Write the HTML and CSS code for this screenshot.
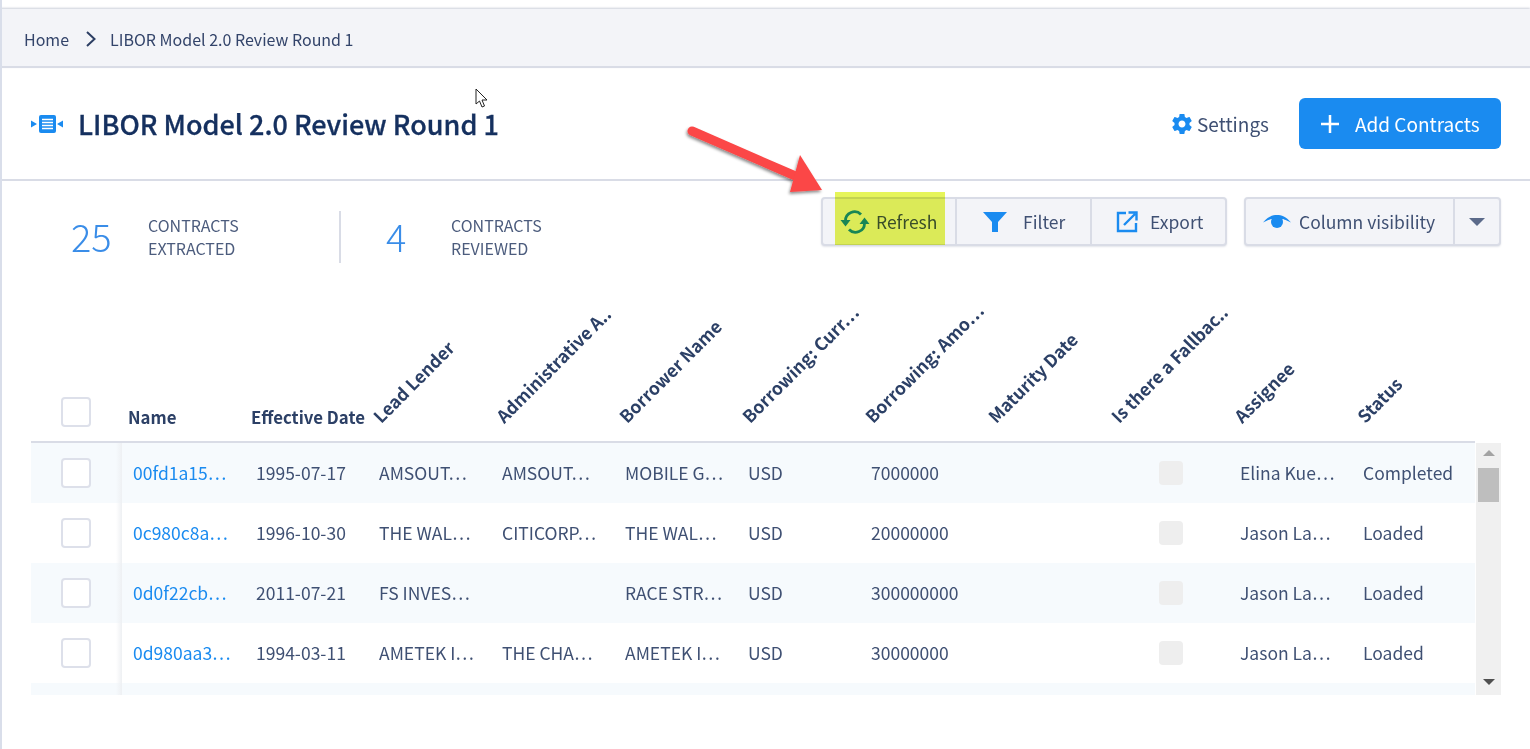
FILE: index.html
```html
<!DOCTYPE html>
<html lang="en">
<head>
    <meta charset="UTF-8">
    <meta name="viewport" content="width=device-width, initial-scale=1.0">
    <title>LIBOR Model 2.0 Review Round 1</title>
    <link rel="stylesheet" href="styles.css">
</head>
<body>
    <nav class="breadcrumb">
        <a href="#">Home</a>
        <svg class="crumb-sep" width="14" height="18" viewBox="0 0 14 18"><path d="M3 2l7.500 7-7.500 7" fill="none" stroke="#2c3e63" stroke-width="2"/></svg>
        <span>LIBOR Model 2.0 Review Round 1</span>
    </nav>

    <header class="page-head">
        <svg class="title-icon" width="32" height="18" viewBox="0 0 32 18">
            <path d="M0 5.500l6 3.500-6 3.500zM32 5.500l-6 3.500 6 3.500z" fill="#1a8bf0"/>
            <rect x="8" y="0" width="17" height="18" rx="2" fill="#1a8bf0"/>
            <path d="M11 4.500h11M11 7.500h11M11 10.500h11M11 13.500h11" stroke="#fff" stroke-width="1.500"/>
        </svg>
        <h1>LIBOR Model 2.0 Review Round 1</h1>
        <a class="settings" href="#">
            <svg width="24" height="24" viewBox="0 0 24 24"><path fill="#1a8bf0" d="M19.430 12.980c.04-.32.07-.64.07-.98s-.03-.66-.07-.98l2.110-1.650c.19-.15.24-.42.12-.64l-2-3.460c-.12-.22-.39-.3-.61-.22l-2.490 1c-.52-.4-1.080-.73-1.690-.98l-.38-2.650C14.460 2.180 14.250 2 14 2h-4c-.25 0-.46.18-.49.420l-.38 2.650c-.61.25-1.170.59-1.690.98l-2.490-1c-.23-.09-.49 0-.61.220l-2 3.460c-.13.220-.07.490.12.640l2.110 1.650c-.04.320-.07.650-.07.980s.03.660.07.980l-2.110 1.650c-.19.150-.24.420-.12.640l2 3.460c.12.220.39.300.61.220l2.490-1c.52.400 1.080.730 1.690.980l.38 2.650c.03.240.24.420.49.420h4c.25 0 .46-.18.49-.42l.38-2.650c.61-.25 1.170-.59 1.690-.98l2.490 1c.23.090.49 0 .61-.22l2-3.460c.12-.22.07-.49-.12-.64l-2.110-1.650zM12 15.500c-1.930 0-3.500-1.570-3.500-3.500s1.570-3.500 3.500-3.500 3.500 1.570 3.500 3.500-1.570 3.500-3.500 3.500z"/></svg>
            <span>Settings</span>
        </a>
        <button class="btn-add">
            <svg width="18" height="18" viewBox="0 0 18 18"><path d="M9 0v18M0 9h18" stroke="#fff" stroke-width="2.500"/></svg>
            Add Contracts
        </button>
    </header>

    <section class="summary">
        <div class="stats">
            <div class="stat stat-first">
                <span class="stat-num">25</span>
                <span class="stat-label">CONTRACTS<br>EXTRACTED</span>
            </div>
            <div class="stat">
                <span class="stat-num">4</span>
                <span class="stat-label">CONTRACTS<br>REVIEWED</span>
            </div>
        </div>
        <div class="tools">
            <div class="btn-group">
                <button class="tool tool-refresh">
                    <svg width="30" height="26" viewBox="0 0 30 26">
                        <path d="M5.500 12a9 9 0 0 1 15.500-6.500M24.500 14a9 9 0 0 1-15.500 6.500" fill="none" stroke="#1a8bf0" stroke-width="2.800"/>
                        <path d="M0.500 11h10l-5 6.500zM29.500 15h-10l5-6.500z" fill="#1a8bf0"/>
                    </svg>
                    <span>Refresh</span>
                </button>
                <button class="tool tool-filter">
                    <svg width="26" height="20" viewBox="0 0 26 20"><path d="M1 0h24l-9 10v10h-6v-10z" fill="#1a8bf0"/></svg>
                    <span>Filter</span>
                </button>
                <button class="tool tool-export">
                    <svg width="22" height="22" viewBox="0 0 22 22">
                        <path d="M10 2H2v18h18v-8" fill="none" stroke="#1a8bf0" stroke-width="2.400"/>
                        <path d="M8 14L19 3M12.500 1.500h8v8" fill="none" stroke="#1a8bf0" stroke-width="2.400"/>
                    </svg>
                    <span>Export</span>
                </button>
            </div>
            <div class="btn-group">
                <button class="tool tool-columns">
                    <svg width="28" height="14" viewBox="0 0 28 14">
                        <path d="M0 7.500C5 1.500 9.500 0 14 0s9 1.500 14 7.500C22 4.500 20 4 19 4a5.300 5.300 0 1 1-10 0C8 4 6 4.500 0 7.500z" fill="#1a8bf0"/>
                        <circle cx="14" cy="7" r="6" fill="#1a8bf0"/>
                    </svg>
                    <span>Column visibility</span>
                </button>
                <button class="tool tool-caret"><i class="caret"></i></button>
            </div>
        </div>
    </section>

    <section class="grid">
        <div class="grid-head">
            <div class="col-check"><span class="check"></span></div>
            <div class="th">Name</div>
            <div class="th">Effective Date</div>
            <div class="th"><span class="th-rot">Lead Lender</span></div>
            <div class="th"><span class="th-rot">Administrative A..</span></div>
            <div class="th"><span class="th-rot">Borrower Name</span></div>
            <div class="th"><span class="th-rot">Borrowing: Curr…</span></div>
            <div class="th"><span class="th-rot">Borrowing: Amo…</span></div>
            <div class="th"><span class="th-rot">Maturity Date</span></div>
            <div class="th"><span class="th-rot">Is there a Fallbac..</span></div>
            <div class="th"><span class="th-rot">Assignee</span></div>
            <div class="th"><span class="th-rot">Status</span></div>
        </div>
        <div class="grid-body">
            <div class="rows">
                <div class="row">
                    <div class="col-check"><span class="check"></span></div>
                    <div class="td"><a href="#">00fd1a15…</a></div>
                    <div class="td">1995-07-17</div>
                    <div class="td">AMSOUT…</div>
                    <div class="td">AMSOUT…</div>
                    <div class="td">MOBILE G…</div>
                    <div class="td">USD</div>
                    <div class="td">7000000</div>
                    <div class="td"></div>
                    <div class="td"><span class="flag"></span></div>
                    <div class="td">Elina Kue…</div>
                    <div class="td">Completed</div>
                </div>
                <div class="row">
                    <div class="col-check"><span class="check"></span></div>
                    <div class="td"><a href="#">0c980c8a…</a></div>
                    <div class="td">1996-10-30</div>
                    <div class="td">THE WAL…</div>
                    <div class="td">CITICORP…</div>
                    <div class="td">THE WAL…</div>
                    <div class="td">USD</div>
                    <div class="td">20000000</div>
                    <div class="td"></div>
                    <div class="td"><span class="flag"></span></div>
                    <div class="td">Jason La…</div>
                    <div class="td">Loaded</div>
                </div>
                <div class="row">
                    <div class="col-check"><span class="check"></span></div>
                    <div class="td"><a href="#">0d0f22cb…</a></div>
                    <div class="td">2011-07-21</div>
                    <div class="td">FS INVES…</div>
                    <div class="td"></div>
                    <div class="td">RACE STR…</div>
                    <div class="td">USD</div>
                    <div class="td">300000000</div>
                    <div class="td"></div>
                    <div class="td"><span class="flag"></span></div>
                    <div class="td">Jason La…</div>
                    <div class="td">Loaded</div>
                </div>
                <div class="row">
                    <div class="col-check"><span class="check"></span></div>
                    <div class="td"><a href="#">0d980aa3…</a></div>
                    <div class="td">1994-03-11</div>
                    <div class="td">AMETEK I…</div>
                    <div class="td">THE CHA…</div>
                    <div class="td">AMETEK I…</div>
                    <div class="td">USD</div>
                    <div class="td">30000000</div>
                    <div class="td"></div>
                    <div class="td"><span class="flag"></span></div>
                    <div class="td">Jason La…</div>
                    <div class="td">Loaded</div>
                </div>
                <div class="row">
                    <div class="col-check"></div>
                </div>
            </div>
            <div class="scrollbar">
                <i class="sb-up"></i>
                <i class="sb-thumb"></i>
                <i class="sb-down"></i>
            </div>
        </div>
    </section>

    <!-- annotation layer from the screenshot tool -->
    <div class="marker"></div>
    <svg class="arrow" width="150" height="80" viewBox="0 0 150 80">
        <defs>
            <filter id="arrow-shadow" x="-10%" y="-20%" width="120%" height="140%">
                <feDropShadow dx="-1" dy="2" stdDeviation="1.500" flood-color="#000" flood-opacity="0.45"/>
            </filter>
        </defs>
        <g filter="url(#arrow-shadow)">
            <path d="M12 11L120 58" stroke="#fb4646" stroke-width="9" stroke-linecap="round"/>
            <path d="M120 35L142 70L110 72z" fill="#fb4646"/>
        </g>
    </svg>
    <svg class="cursor" width="14" height="20" viewBox="0 0 14 20"><path d="M1 1v15l3.500-3 2.500 6 2.500-1-2.500-6h5z" fill="#fff" stroke="#222" stroke-width="1"/></svg>
</body>
</html>
```

FILE: styles.css
```css
* {
    box-sizing: border-box;
}
body {
    font-family: "Noto Sans CJK JP", "Noto Sans", Arial, sans-serif;
    color: #3f5073;
    background-color: #fff;
    margin: 0;
    padding-top: 9px;
    height: 749px;
    overflow: hidden;
    border-left: 2px solid #d9deea;
    position: relative;
}
a {
    text-decoration: none;
}
button {
    font-family: inherit;
    cursor: pointer;
}
.breadcrumb {
    height: 59px;
    margin-left: -2px;
    padding: 2px 0 0 24px;
    display: flex;
    align-items: center;
    font-size: 16px;
    line-height: 22px;
    color: #33446a;
    background-color: #f3f4f8;
    border-bottom: 2px solid #d9dce6;
    box-shadow: 0 -1px 2px #ccd0da;
}
.breadcrumb a {
    color: #33446a;
}
.crumb-sep {
    margin: 0 12px 0 15px;
}
.page-head {
    height: 113px;
    padding: 0 29px;
    display: flex;
    align-items: center;
    border-bottom: 2px solid #d9dce6;
}
.title-icon {
    margin-right: 15px;
}
h1 {
    font-size: 27px;
    line-height: 36px;
    font-weight: 500;
    -webkit-text-stroke: 0.3px #15305f;
    color: #15305f;
    margin: 0;
    flex: 1;
}
.settings {
    display: flex;
    align-items: center;
    gap: 3px;
    font-size: 19px;
    line-height: 24px;
    color: #3f5073;
    margin-right: 30px;
}
.settings span {
    padding-top: 1px;
}
.btn-add {
    width: 202px;
    height: 51px;
    display: flex;
    align-items: center;
    gap: 16px;
    padding: 0 0 0 22px;
    font-size: 19px;
    font-weight: 400;
    color: #fff;
    background-color: #1a8bf0;
    border: none;
    border-radius: 6px;
}
.summary {
    height: 119px;
    padding: 16px 29px 0;
    display: flex;
    justify-content: space-between;
    align-items: flex-start;
}
.stats {
    display: flex;
    padding-top: 14px;
    padding-left: 40px;
}
.stat {
    display: flex;
    align-items: center;
    height: 52px;
    padding-left: 45px;
}
.stat-first {
    width: 270px;
    padding-left: 0;
    border-right: 2px solid #d9dce6;
}
.stat-num {
    width: 65px;
    font-size: 38px;
    font-weight: 300;
    line-height: 48px;
    padding-bottom: 2px;
    color: #3a8de8;
}
.stat-first .stat-num {
    width: 77px;
}
.stat-label {
    font-size: 16px;
    line-height: 23px;
    color: #4c5c7d;
}
.tools {
    display: flex;
    gap: 17px;
}
.btn-group {
    display: flex;
    height: 49px;
    background-color: #f3f4f8;
    border: 2px solid #d9dce6;
    border-radius: 4px;
    box-shadow: 0 1px 2px #e2e4ea;
}
.tool {
    display: flex;
    align-items: center;
    height: 100%;
    font-size: 17.5px;
    line-height: 24px;
    color: #3f5073;
    background: none;
    border: none;
    border-right: 2px solid #d9dce6;
    padding: 1px 0 0;
}
.tool svg {
    flex: none;
}
.tool:last-child {
    border-right: none;
}
.tool-refresh {
    width: 134px;
    padding-left: 17px;
    gap: 6px;
}
.tool-filter {
    width: 135px;
    padding-left: 25px;
    gap: 15px;
}
.tool-export {
    width: 133px;
    padding-left: 24px;
    gap: 12px;
}
.tool-columns {
    width: 209px;
    padding-left: 17px;
    gap: 8px;
}
.tool-caret {
    width: 44px;
    justify-content: center;
}
.caret {
    border-left: 8px solid transparent;
    border-right: 8px solid transparent;
    border-top: 8px solid #5b6a8a;
}
.grid {
    margin-left: 29px;
    width: 1470px;
}
.grid-head,
.row {
    display: grid;
    grid-template-columns: 91px repeat(11, 123px);
}
.grid-head {
    width: 1444px;
    height: 143px;
    border-bottom: 2px solid #d9dce6;
    align-items: end;
}
.col-check {
    height: 100%;
    padding-left: 30px;
    display: flex;
    align-items: center;
}
.grid-head .col-check {
    height: auto;
    padding-bottom: 14px;
}
.check {
    width: 30px;
    height: 30px;
    background-color: #fff;
    border: 2px solid #dde0ea;
    border-radius: 4px;
}
.th {
    position: relative;
    height: 22px;
    margin-bottom: 13px;
    padding-left: 6px;
    font-size: 16.8px;
    line-height: 22px;
    font-weight: 700;
    white-space: nowrap;
    color: #2c4066;
}
.th-rot {
    position: absolute;
    left: 16px;
    bottom: 1px;
    font-size: 17.500px;
    transform-origin: 0 100%;
    transform: rotate(-45deg);
}
.grid-body {
    display: flex;
    height: 252px;
    overflow: hidden;
    gap: 1px;
}
.rows {
    width: 1444px;
}
.row {
    height: 60px;
    align-items: center;
}
.row:nth-child(odd) {
    background-color: #f6fafd;
}
.row .col-check {
    background-image: linear-gradient(to left, #eef0f3, transparent 6px);
    width: 91px;
}
.td {
    padding: 0 0 0 11px;
    font-size: 17.5px;
    line-height: 24px;
    white-space: nowrap;
    color: #3f5073;
}
.td a {
    color: #1a8bf0;
}
.flag {
    display: block;
    width: 24px;
    height: 24px;
    margin-left: 42px;
    background-color: #eee;
    border-radius: 4px;
}
.scrollbar {
    width: 25px;
    height: 252px;
    position: relative;
    background-color: #f0f0f0;
}
.sb-thumb {
    position: absolute;
    left: 2px;
    top: 25px;
    width: 21px;
    height: 34px;
    background-color: #bebebe;
}
.sb-up,
.sb-down {
    position: absolute;
    left: 7px;
    border-left: 6px solid transparent;
    border-right: 6px solid transparent;
}
.sb-up {
    top: 7px;
    border-bottom: 6px solid #a3a3a3;
}
.sb-down {
    bottom: 10px;
    border-top: 6px solid #505050;
}
.marker {
    position: absolute;
    left: 833px;
    top: 192px;
    width: 110px;
    height: 53px;
    background-color: #e6f55a;
    mix-blend-mode: multiply;
}
.arrow {
    position: absolute;
    left: 678px;
    top: 120px;
}
.cursor {
    position: absolute;
    left: 473px;
    top: 88px;
}
```
